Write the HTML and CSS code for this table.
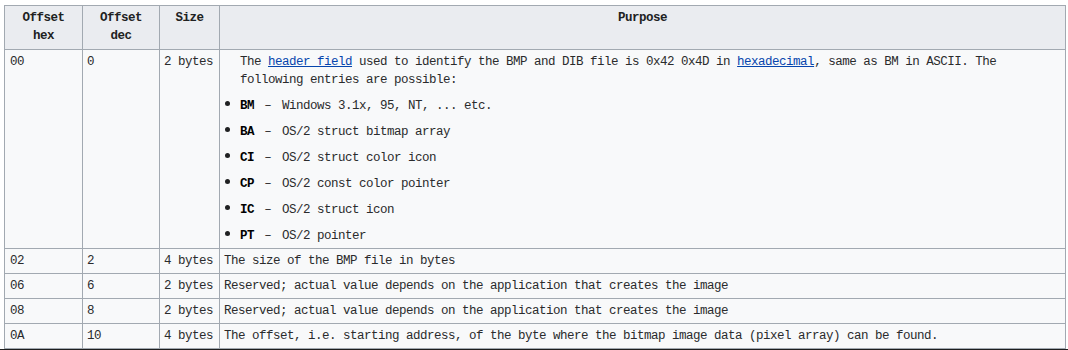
FILE: index.html
```html
<!DOCTYPE html>
<html lang="en">
<head>
<meta charset="utf-8">
<title>BMP file header</title>
<link rel="stylesheet" href="styles.css">
</head>
<body>
<table class="wikitable">
  <colgroup>
    <col class="c-hex">
    <col class="c-dec">
    <col class="c-size">
    <col class="c-purpose">
  </colgroup>
  <thead>
    <tr>
      <th>Offset<br>hex</th>
      <th>Offset<br>dec</th>
      <th>Size</th>
      <th>Purpose</th>
    </tr>
  </thead>
  <tbody>
    <tr>
      <td>00</td>
      <td>0</td>
      <td>2 bytes</td>
      <td>
        <div class="purpose">
          <p>The <a href="#">header field</a> used to identify the BMP and DIB file is 0x42 0x4D in <a href="#">hexadecimal</a>, same as BM in ASCII. The following entries are possible:</p>
          <ul class="entries">
            <li><b>BM</b> <span class="dash">–</span> Windows 3.1x, 95, NT, ... etc.</li>
            <li><b>BA</b> <span class="dash">–</span> OS/2 struct bitmap array</li>
            <li><b>CI</b> <span class="dash">–</span> OS/2 struct color icon</li>
            <li><b>CP</b> <span class="dash">–</span> OS/2 const color pointer</li>
            <li><b>IC</b> <span class="dash">–</span> OS/2 struct icon</li>
            <li><b>PT</b> <span class="dash">–</span> OS/2 pointer</li>
          </ul>
        </div>
      </td>
    </tr>
    <tr>
      <td>02</td>
      <td>2</td>
      <td>4 bytes</td>
      <td>The size of the BMP file in bytes</td>
    </tr>
    <tr>
      <td>06</td>
      <td>6</td>
      <td>2 bytes</td>
      <td>Reserved; actual value depends on the application that creates the image</td>
    </tr>
    <tr>
      <td>08</td>
      <td>8</td>
      <td>2 bytes</td>
      <td>Reserved; actual value depends on the application that creates the image</td>
    </tr>
    <tr>
      <td>0A</td>
      <td>10</td>
      <td>4 bytes</td>
      <td>The offset, i.e. starting address, of the byte where the bitmap image data (pixel array) can be found.</td>
    </tr>
  </tbody>
</table>
<div class="bottom-bar"></div>
</body>
</html>
```
FILE: styles.css
```css
html, body {
  margin: 0;
  padding: 0;
  background: #ffffff;
}

body {
  padding-top: 5px;
  font-family: "Liberation Mono", "DejaVu Sans Mono", monospace;
  font-size: 12.5px;
  letter-spacing: -0.5px;
  color: #2a2b2c;
}

.wikitable {
  margin-left: 4px;
  width: 1062px;
  table-layout: fixed;
  border-collapse: collapse;
  border: 1px solid #a2a9b1;
  background: #f8f9fa;
}

.c-hex { width: 78px; }
.c-dec { width: 77px; }
.c-size { width: 60px; }

.wikitable th,
.wikitable td {
  border: 1px solid #a2a9b1;
  padding: 3px 4px;
  line-height: 18px;
  vertical-align: top;
  text-align: left;
}

.wikitable th {
  background: #eaecf0;
  text-align: center;
  font-weight: bold;
  padding-bottom: 4px;
  color: #202122;
}

.wikitable td:first-child {
  padding-left: 5px;
}

.purpose {
  padding-left: 16px;
}

.purpose p {
  margin: 0;
}

.purpose a {
  color: #0645ad;
  text-decoration: underline;
}

.entries {
  list-style: none;
  margin: 0;
  padding: 0;
}

.entries li {
  position: relative;
  margin-top: 8px;
}

.entries li::before {
  content: "";
  position: absolute;
  left: -15px;
  top: 4px;
  width: 5px;
  height: 5px;
  border-radius: 50%;
  background: #202122;
}

.entries b {
  font-weight: bold;
  color: #000;
}

.dash {
  display: inline-block;
  width: 14px;
  text-align: center;
  letter-spacing: 0;
}

.bottom-bar {
  height: 2px;
  background: #1e1e1e;
}
```
